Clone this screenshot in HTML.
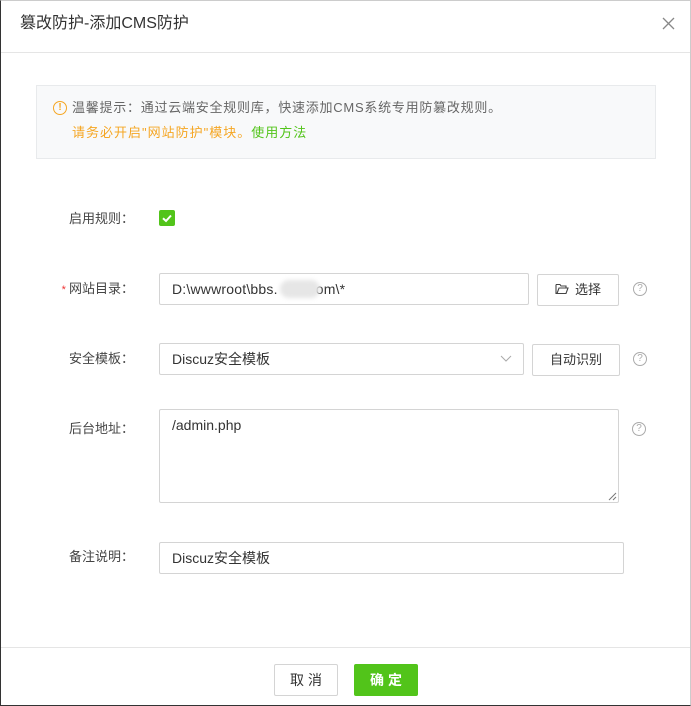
<!DOCTYPE html>
<html><head><meta charset="utf-8"><style>
*{box-sizing:border-box;margin:0;padding:0}
html,body{width:691px;height:706px;overflow:hidden;background:#fff}
body{position:relative;font-family:"Liberation Sans","Noto Sans CJK SC",sans-serif;color:#333;font-size:13px}
.frame{position:absolute;left:0;top:0;width:691px;height:706px;border:1px solid #333;border-top-color:#ccc;border-right-color:#ccc}
.a{position:absolute}
.lbl{position:absolute;width:120px;left:14px;text-align:right;color:#444;font-size:13px;line-height:16px}
.inp{position:absolute;border:1px solid #d4d4d4;border-radius:2px;background:#fff;padding-left:12px;font-size:14px;color:#333}
.btn{position:absolute;border:1px solid #d4d4d4;border-radius:2px;background:#fff;text-align:center;font-size:13px;color:#333}
.q{position:absolute;width:14px;height:14px;border:1px solid #aaa;border-radius:50%;font-size:10px;line-height:12px;text-align:center;color:#aaa}
</style></head><body>
<div class="frame"></div>
<div class="a" style="left:20px;top:14px;font-size:16px;color:#333;line-height:20px">篡改防护-添加CMS防护</div>
<svg class="a" style="left:662px;top:17px" width="13" height="13" viewBox="0 0 13 13"><path d="M1 1L12 12M12 1L1 12" stroke="#888" stroke-width="1.3"/></svg>
<div class="a" style="left:1px;top:52px;width:689px;height:1px;background:#e5e5e5"></div>

<div class="a" style="left:36px;top:85px;width:620px;height:74px;background:#f8f9fa;border:1px solid #e8eaec"></div>
<div class="a" style="left:53px;top:101px;width:14px;height:14px;border:1.3px solid #f5a623;border-radius:50%;font-size:10px;line-height:11px;text-align:center;color:#f5a623;font-weight:bold">!</div>
<div class="a" style="left:72px;top:100px;font-size:13px;color:#666;line-height:16px;letter-spacing:0.75px">温馨提示：通过云端安全规则库，快速添加CMS系统专用防篡改规则。</div>
<div class="a" style="left:72px;top:125px;font-size:13px;line-height:16px;letter-spacing:1px"><span style="color:#f5a623">请务必开启"网站防护"模块。</span><span style="color:#52c41a">使用方法</span></div>

<div class="lbl" style="top:211px">启用规则：</div>
<div class="a" style="left:159px;top:210px;width:16px;height:16px;background:#52c41a;border-radius:2px"><svg width="16" height="16"><path d="M4 8.3L7 11L12 5.5" stroke="#fff" stroke-width="2" fill="none"/></svg></div>

<div class="lbl" style="top:281px"><span style="color:#e33;font-size:11px">* </span>网站目录：</div>
<div class="inp" style="left:159px;top:273px;width:370px;height:32px;line-height:30px;letter-spacing:0.2px">D:\wwwroot\bbs.<span style="display:inline-block;width:38px"></span>om\*</div>
<div class="a" style="left:280px;top:280px;width:40px;height:18px;background:#e6e6e6;border-radius:9px;filter:blur(2px)"></div>
<div class="btn" style="left:537px;top:274px;width:82px;height:32px;line-height:30px"><svg width="14" height="12" viewBox="0 0 14 12" style="vertical-align:-1px;margin-right:6px"><path d="M1 1.5h4l1 1.5h5v2M1 1.5v9h10l2-5.5H4l-2 5.5" stroke="#444" stroke-width="1.1" fill="none"/></svg>选择</div>
<div class="q" style="left:633px;top:282px">?</div>

<div class="lbl" style="top:351px">安全模板：</div>
<div class="inp" style="left:159px;top:343px;width:365px;height:32px;line-height:30px">Discuz安全模板</div>
<svg class="a" style="left:500px;top:355px" width="12" height="8"><path d="M1 1L6 6L11 1" stroke="#aaa" fill="none"/></svg>
<div class="btn" style="left:532px;top:344px;width:88px;height:32px;line-height:30px">自动识别</div>
<div class="q" style="left:633px;top:352px">?</div>

<div class="lbl" style="top:421px">后台地址：</div>
<div class="inp" style="left:159px;top:409px;width:460px;height:94px;padding-top:6px;line-height:18px">/admin.php</div>
<svg class="a" style="left:607px;top:491px" width="10" height="10"><path d="M9 2L2 9M9 6L6 9" stroke="#777"/></svg>
<div class="q" style="left:632px;top:422px">?</div>

<div class="lbl" style="top:549px">备注说明：</div>
<div class="inp" style="left:159px;top:542px;width:465px;height:32px;line-height:30px">Discuz安全模板</div>

<div class="a" style="left:1px;top:647px;width:689px;height:1px;background:#e5e5e5"></div>
<div class="btn" style="left:274px;top:664px;width:64px;height:32px;line-height:30px;letter-spacing:4px;padding-left:4px;font-size:14px">取消</div>
<div class="a" style="left:354px;top:664px;width:64px;height:32px;line-height:32px;background:#52c41a;border-radius:2px;color:#fff;text-align:center;font-weight:bold;letter-spacing:4px;padding-left:4px;font-size:14px">确定</div>
</body></html>
